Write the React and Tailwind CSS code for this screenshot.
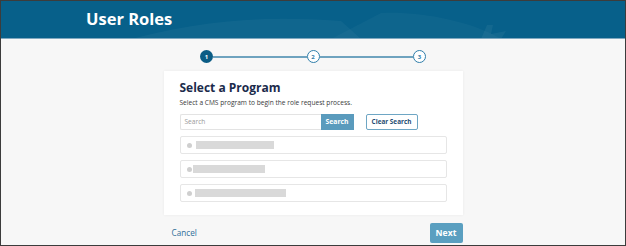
import React from "react";

const font = { fontFamily: '"Open Sans", "Noto Sans", sans-serif' };

function Step({ n, active }) {
  return (
    <div
      className={
        "w-[13px] h-[13px] rounded-full flex items-center justify-center text-[6px] font-bold leading-none shrink-0 " +
        (active
          ? "bg-[#0b5c85] text-white"
          : "bg-white border border-[#2f7eaa] text-[#2f7eaa]")
      }
    >
      {n}
    </div>
  );
}

function Row({ w, ml }) {
  return (
    <div className="h-[18px] border border-[#e6e6e6] rounded-[2px] bg-white flex items-center pl-[6px]">
      <div className="w-[5px] h-[5px] rounded-full bg-[#cfcfcf]" />
      <div className={"h-[8px] bg-[#d9d9d9] blur-[0.6px] " + ml + " " + w} />
    </div>
  );
}

export default function App() {
  return (
    <div
      className="w-[626px] h-[246px] border border-[#3c3c3c] bg-[#f7f7f7] flex flex-col overflow-hidden"
      style={font}
    >
      <div className="relative h-[38px] bg-[#07608a] border-b border-[#7fa8c0] shrink-0 overflow-hidden">
        <svg className="absolute inset-0" width="624" height="38" viewBox="0 0 624 38">
          <path d="M130 38 C 200 20, 260 14, 340 20 L 360 38 Z" fill="#ffffff" opacity="0.04" />
          <path d="M380 12 C 420 10, 470 20, 500 38 L 330 38 Z" fill="#ffffff" opacity="0.03" />
          <path d="M480 38 L 486 24 L 492 24 L 490 33 L 505 30 L 500 38 Z" fill="#ffffff" opacity="0.05" />
        </svg>
        <div className="relative pl-[85px] pt-[7px] text-[16.5px] leading-[22px] font-bold text-white">
          User Roles
        </div>
      </div>

      <div className="flex justify-center mt-[11px]">
        <div className="flex items-center w-[226px]">
          <Step n="1" active />
          <div className="flex-1 h-[2px] bg-[#6fa3bf]" />
          <Step n="2" />
          <div className="flex-1 h-[2px] bg-[#6fa3bf]" />
          <Step n="3" />
        </div>
      </div>

      <div className="mx-auto mt-[8px] w-[299px] bg-white shadow-[0_0_3px_rgba(0,0,0,0.06)] pt-[9px] pb-[13px] px-[16px] flex flex-col">
        <div className="text-[12px] leading-[16px] font-bold text-[#1b2b4b]">Select a Program</div>
        <div className="text-[6.6px] leading-[9px] text-[#3a3a3a] mt-[2px]">
          Select a CMS program to begin the role request process.
        </div>
        <div className="flex items-center mt-[7px] h-[16px]">
          <div className="w-[141px] h-[16px] border border-[#e3e3e3] border-r-0 rounded-l-[2px] flex items-center pl-[4px] text-[6.6px] text-[#9a9a9a]">
            Search
          </div>
          <div className="w-[33px] h-[16px] bg-[#5a9bbd] text-white text-[6.8px] font-bold flex items-center justify-center">
            Search
          </div>
          <div className="ml-[12px] w-[52px] h-[16px] border border-[#6ea6c4] rounded-[2px] text-[#1f4d73] text-[6.4px] font-bold flex items-center justify-center">
            Clear Search
          </div>
        </div>
        <div className="flex flex-col gap-[6px] mt-[6px]">
          <Row w="w-[78px]" ml="ml-[4px]" />
          <Row w="w-[72px]" ml="ml-[1px]" />
          <Row w="w-[91px]" ml="ml-[3px]" />
        </div>
      </div>

      <div className="mx-auto w-[299px] flex items-center justify-between mt-[8px] pl-[8px]">
        <div className="text-[8.2px] text-[#2f6f99]">Cancel</div>
        <div className="w-[33px] h-[20px] bg-[#5a9fc0] rounded-[2px] text-white text-[8.6px] font-bold flex items-center justify-center">
          Next
        </div>
      </div>
    </div>
  );
}
